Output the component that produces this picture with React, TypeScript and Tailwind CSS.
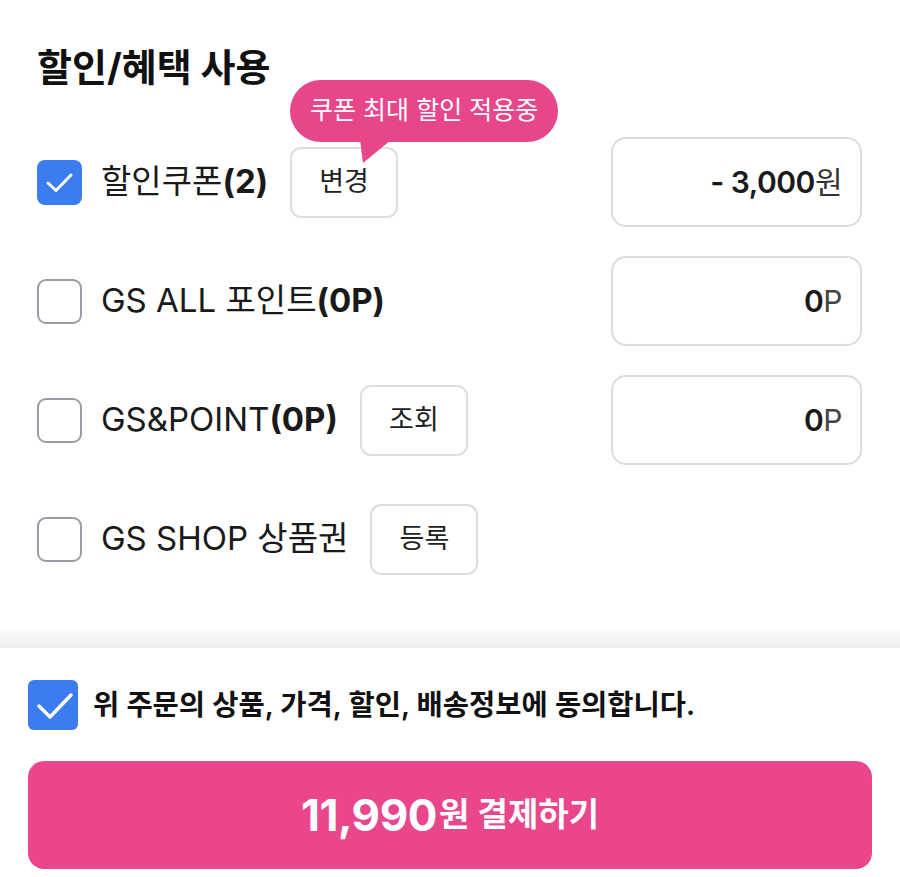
import type { ReactNode } from "react";

const FONT = "font-['Inter','Noto_Sans_CJK_KR',sans-serif]";

function Check({ checked, size }: { checked: boolean; size: "md" | "lg" }) {
  if (size === "lg") {
    return (
      <span className="flex h-[50px] w-[50px] shrink-0 items-center justify-center rounded-[6px] bg-[#3b7cf0]">
        <svg width="50" height="50" viewBox="0 0 50 50" fill="none">
          <path
            d="M11 26 L22 37 L43 15"
            stroke="white"
            strokeWidth="3.5"
            strokeLinecap="round"
            strokeLinejoin="round"
          />
        </svg>
      </span>
    );
  }
  if (!checked) {
    return (
      <span className="h-[45px] w-[45px] shrink-0 rounded-[9px] border-[2.5px] border-[#9c9ca6] bg-white" />
    );
  }
  return (
    <span className="flex h-[45px] w-[45px] shrink-0 items-center justify-center rounded-[8px] bg-[#3b7cf0]">
      <svg width="45" height="45" viewBox="0 0 45 45" fill="none">
        <path
          d="M11 23 L19 30.5 L34 15"
          stroke="white"
          strokeWidth="3"
          strokeLinecap="round"
          strokeLinejoin="round"
        />
      </svg>
    </span>
  );
}

function SmallButton({ children }: { children: ReactNode }) {
  return (
    <button
      type="button"
      className="flex h-[71px] w-[108px] shrink-0 items-center justify-center rounded-[11px] border-2 border-[#dedede] bg-white text-[27px] text-[#222]"
    >
      {children}
    </button>
  );
}

function ValueBox({ children }: { children: ReactNode }) {
  return (
    <div className="flex h-[90px] w-[251px] items-center justify-end rounded-[15px] border-2 border-[#dcdcdc] bg-white pr-[18px] text-[30px] tracking-[-0.5px] text-[#1a1a1a]">
      {children}
    </div>
  );
}

function Row({
  checked,
  label,
  action,
  value,
}: {
  checked: boolean;
  label: ReactNode;
  action?: ReactNode;
  value?: ReactNode;
}) {
  return (
    <div className="flex h-[90px] items-center justify-between">
      <div className="flex items-center">
        <Check checked={checked} size="md" />
        <span className="ml-[19px] text-[33px] text-[#1a1a1a]">{label}</span>
        {action ? <div className="ml-[22px]">{action}</div> : null}
      </div>
      {value ? <ValueBox>{value}</ValueBox> : null}
    </div>
  );
}

export default function App() {
  return (
    <div className={`${FONT} flex min-h-[877px] w-[900px] flex-col bg-white`}>
      <section className="pl-[37px] pr-[38px] pt-[44px]">
        <h2 className="text-[38px] font-bold leading-[46px] text-[#111]">
          할인/혜택 사용
        </h2>

        <div className="mt-[47px] flex flex-col gap-[29px]">
          <Row
            checked
            label={
              <>
                할인쿠폰<b className="font-bold">(2)</b>
              </>
            }
            action={
              <div className="relative">
                <SmallButton>변경</SmallButton>
                <div className="absolute bottom-[calc(100%+5px)] left-0 flex h-[62px] w-[268px] items-center justify-center rounded-full bg-[#e8468b] text-[25px] text-white">
                  쿠폰 최대 할인 적용중
                  <svg
                    className="absolute left-[70px] top-[60px]"
                    width="32"
                    height="25"
                    viewBox="0 0 32 25"
                  >
                    <path d="M0 0 L31 0 L3 23 Z" fill="#e8468b" />
                  </svg>
                </div>
              </div>
            }
            value={
              <>
                <span className="font-semibold">- 3,000</span>
                <span className="text-[#333]">원</span>
              </>
            }
          />
          <Row
            checked={false}
            label={
              <>
                GS ALL 포인트<b className="font-bold">(0P)</b>
              </>
            }
            value={
              <>
                <span className="font-semibold">0</span>
                <span className="text-[#444]">P</span>
              </>
            }
          />
          <Row
            checked={false}
            label={
              <>
                GS&amp;POINT<b className="font-bold">(0P)</b>
              </>
            }
            action={<SmallButton>조회</SmallButton>}
            value={
              <>
                <span className="font-semibold">0</span>
                <span className="text-[#444]">P</span>
              </>
            }
          />
          <Row
            checked={false}
            label="GS SHOP 상품권"
            action={<SmallButton>등록</SmallButton>}
          />
        </div>
      </section>

      <div className="mt-[46px] h-[18px] bg-linear-to-b from-[#fcfcfc] via-[#f2f3f5] to-[#eeeff1]" />

      <footer className="flex flex-col px-[28px] pb-[8px] pt-[32px]">
        <div className="flex items-center">
          <Check checked size="lg" />
          <span className="ml-[15px] text-[28.5px] font-semibold text-[#111]">
            위 주문의 상품, 가격, 할인, 배송정보에 동의합니다.
          </span>
        </div>
        <button
          type="button"
          className="mt-[31px] flex h-[108px] w-full items-center justify-center rounded-[16px] bg-[#e9468c] text-white"
        >
          <span className="text-[44px] font-bold tracking-[-0.5px]">11,990</span>
          <span className="ml-[2px] text-[33px] font-semibold">원 결제하기</span>
        </button>
      </footer>
    </div>
  );
}
